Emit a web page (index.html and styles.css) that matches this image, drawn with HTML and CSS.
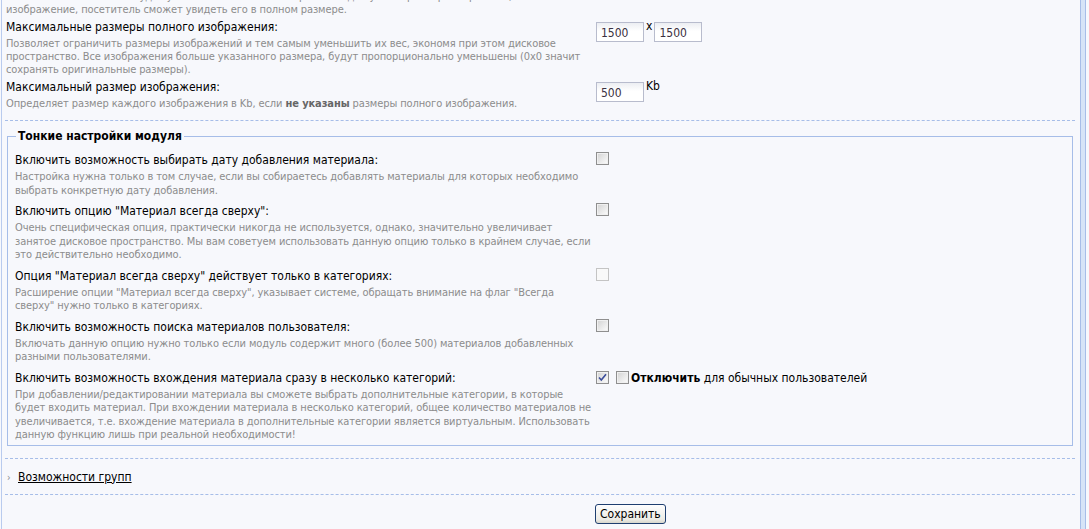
FILE: index.html
```html
<!DOCTYPE html>
<html lang="ru">

<head>
    <meta charset="UTF-8" />
    <title>Настройки модуля</title>
    <link rel="stylesheet" href="styles.css">
</head>

<body>
    <div class="page">
        <div class="panel">
            <div class="block block-top">
                <div class="desc desc-cut">Система автоматически будет уменьшать большие изображения до нужных размеров. При этом, нажав на изображение, посетитель сможет увидеть его в полном размере.</div>

                <div class="row">
                    <div class="info">
                        <div class="label">Максимальные размеры полного изображения:</div>
                        <div class="desc">Позволяет ограничить размеры изображений и тем самым уменьшить их вес, экономя при этом дисковое пространство. Все изображения больше указанного размера, будут пропорционально уменьшены (0x0 значит сохранять оригинальные размеры).</div>
                    </div>
                    <div class="ctrl">
                        <input class="field" type="text" value="1500"><span class="unit">x</span><input class="field" type="text" value="1500">
                    </div>
                </div>

                <div class="row">
                    <div class="info">
                        <div class="label">Максимальный размер изображения:</div>
                        <div class="desc">Определяет размер каждого изображения в Kb, если <b>не указаны</b> размеры полного изображения.</div>
                    </div>
                    <div class="ctrl">
                        <input class="field" type="text" value="500"><span class="unit">Kb</span>
                    </div>
                </div>
            </div>

            <div class="block block-fine">
                <fieldset class="fine">
                    <legend>Тонкие настройки модуля</legend>

                    <div class="row">
                        <div class="info">
                            <div class="label">Включить возможность выбирать дату добавления материала:</div>
                            <div class="desc">Настройка нужна только в том случае, если вы собираетесь добавлять материалы для которых необходимо выбрать конкретную дату добавления.</div>
                        </div>
                        <div class="ctrl"><span class="check"></span></div>
                    </div>

                    <div class="row">
                        <div class="info">
                            <div class="label">Включить опцию "Материал всегда сверху":</div>
                            <div class="desc">Очень специфическая опция, практически никогда не используется, однако, значительно увеличивает занятое дисковое пространство. Мы вам советуем использовать данную опцию только в крайнем случае, если это действительно необходимо.</div>
                        </div>
                        <div class="ctrl"><span class="check"></span></div>
                    </div>

                    <div class="row">
                        <div class="info">
                            <div class="label">Опция "Материал всегда сверху" действует только в категориях:</div>
                            <div class="desc">Расширение опции "Материал всегда сверху", указывает системе, обращать внимание на флаг "Всегда сверху" нужно только в категориях.</div>
                        </div>
                        <div class="ctrl"><span class="check disabled"></span></div>
                    </div>

                    <div class="row">
                        <div class="info">
                            <div class="label">Включить возможность поиска материалов пользователя:</div>
                            <div class="desc">Включать данную опцию нужно только если модуль содержит много (более 500) материалов добавленных разными пользователями.</div>
                        </div>
                        <div class="ctrl"><span class="check"></span></div>
                    </div>

                    <div class="row">
                        <div class="info">
                            <div class="label">Включить возможность вхождения материала сразу в несколько категорий:</div>
                            <div class="desc">При добавлении/редактировании материала вы сможете выбрать дополнительные категории, в которые будет входить материал. При вхождении материала в несколько категорий, общее количество материалов не увеличивается, т.е. вхождение материала в дополнительные категории является виртуальным. Использовать данную функцию лишь при реальной необходимости!</div>
                        </div>
                        <div class="ctrl">
                            <span class="check checked"><svg width="9" height="9" viewBox="0 0 9 9"><path d="M1 4.5 L3.3 7 L8 1.2" fill="none" stroke="#3a4c9a" stroke-width="1.6"/></svg></span>
                            <span class="check second"></span><span class="opt"><b>Отключить</b> для обычных пользователей</span>
                        </div>
                    </div>
                </fieldset>
            </div>

            <div class="block block-link">
                <span class="arrow">›</span><a href="#" class="toggle">Возможности групп</a>
            </div>

            <div class="actions">
                <button class="btn" type="button">Сохранить</button>
            </div>
        </div>
        <div class="edge"></div>
    </div>
</body>

</html>
```

FILE: styles.css
```css
:root {
    --line: #a6bde8;
    --bg: #f7f8fc;
    --muted: #8c8c8c;
    --font: 'DejaVu Sans Condensed', 'DejaVu Sans', sans-serif;
}

* {
    box-sizing: border-box;
}

html,
body {
    margin: 0;
    padding: 0;
    height: 100%;
    overflow: hidden;
    background: var(--bg);
    font-family: var(--font);
    color: #000;
}

.page {
    display: flex;
    height: 100%;
    padding-left: 1px;
}

.panel {
    width: 1080px;
    border-left: 1px solid #b9cbee;
    border-right: 1px solid var(--line);
    padding: 0 5px 0 3px;
}

.edge {
    width: 5px;
    background: #d6e4f7;
    border-right: 1px solid var(--line);
}

.block {
    border-bottom: 1px dashed var(--line);
}

.block-top {
    margin-top: -10px;
    padding: 0 0 7px 1px;
}

.row {
    display: flex;
    padding-bottom: 3px;
}

.info {
    width: 590px;
    flex: none;
}

.block-top .info {
    padding-right: 4px;
}

.label {
    font-size: 12px;
    line-height: 16px;
}

.desc {
    margin-top: 2px;
    font-size: 11px;
    line-height: 13px;
    letter-spacing: -0.1px;
    color: var(--muted);
}

.desc b {
    color: #666;
}

.desc-cut {
    margin: 0 20px 3px 0;
    width: 565px;
}

.ctrl {
    display: flex;
    align-items: flex-start;
    font-size: 12px;
    line-height: 16px;
}

.field {
    width: 48px;
    height: 20px;
    margin-top: 3px;
    border: 1px solid #b8bccd;
    padding: 2px 4px 0;
    font: 12px var(--font);
    color: #3a3040;
    background: linear-gradient(#eceef2, #fff 45%);
}

.unit {
    margin: 0 2px;
    line-height: 14px;
}

/* тонкие настройки */
.block-fine {
    padding: 7px 0 12px;
}

.fine {
    margin: 0 2px;
    padding: 8px 7px 3px;
    border: 1px solid var(--line);
}

.fine legend {
    padding: 0 2px;
    margin-left: 1px;
    font-size: 12px;
    font-weight: 700;
    line-height: 16px;
}

.fine .row {
    padding-bottom: 6px;
}

.fine .row:last-child {
    padding-bottom: 0;
}

.fine .info {
    width: 581px;
    padding-right: 4px;
}

.fine .desc {
    line-height: 13.5px;
}

.check {
    display: inline-flex;
    align-items: center;
    justify-content: center;
    width: 13px;
    height: 13px;
    border: 1px solid #8f8f8f;
    box-shadow: inset 0 0 0 1px #f0f0f0;
    background: linear-gradient(135deg, #d2d2d2, #fdfdfd);
}

.check.disabled {
    border-color: #c4c4c4;
    background: #f9f9f9;
    box-shadow: none;
}

.check.second {
    margin: 1px 2px 0 7px;
}

.check.checked {
    margin-top: 1px;
}

.opt {
    line-height: 16px;
}

/* группы */
.block-link {
    padding: 10px 0 8px 2px;
    font-size: 12px;
    line-height: 16px;
}

.arrow {
    display: inline-block;
    width: 11px;
    color: #888;
    font-size: 10px;
}

.toggle {
    color: #000;
    text-decoration: underline;
}

.actions {
    display: flex;
    padding: 9px 0 0 590px;
}

.btn {
    height: 20px;
    padding: 0 4px;
    border: 1px solid #1f3f70;
    border-radius: 3px;
    background: linear-gradient(#fefefe, #ecebe5 80%, #d8d6cc);
    font: 12px var(--font);
    color: #000;
}
```
